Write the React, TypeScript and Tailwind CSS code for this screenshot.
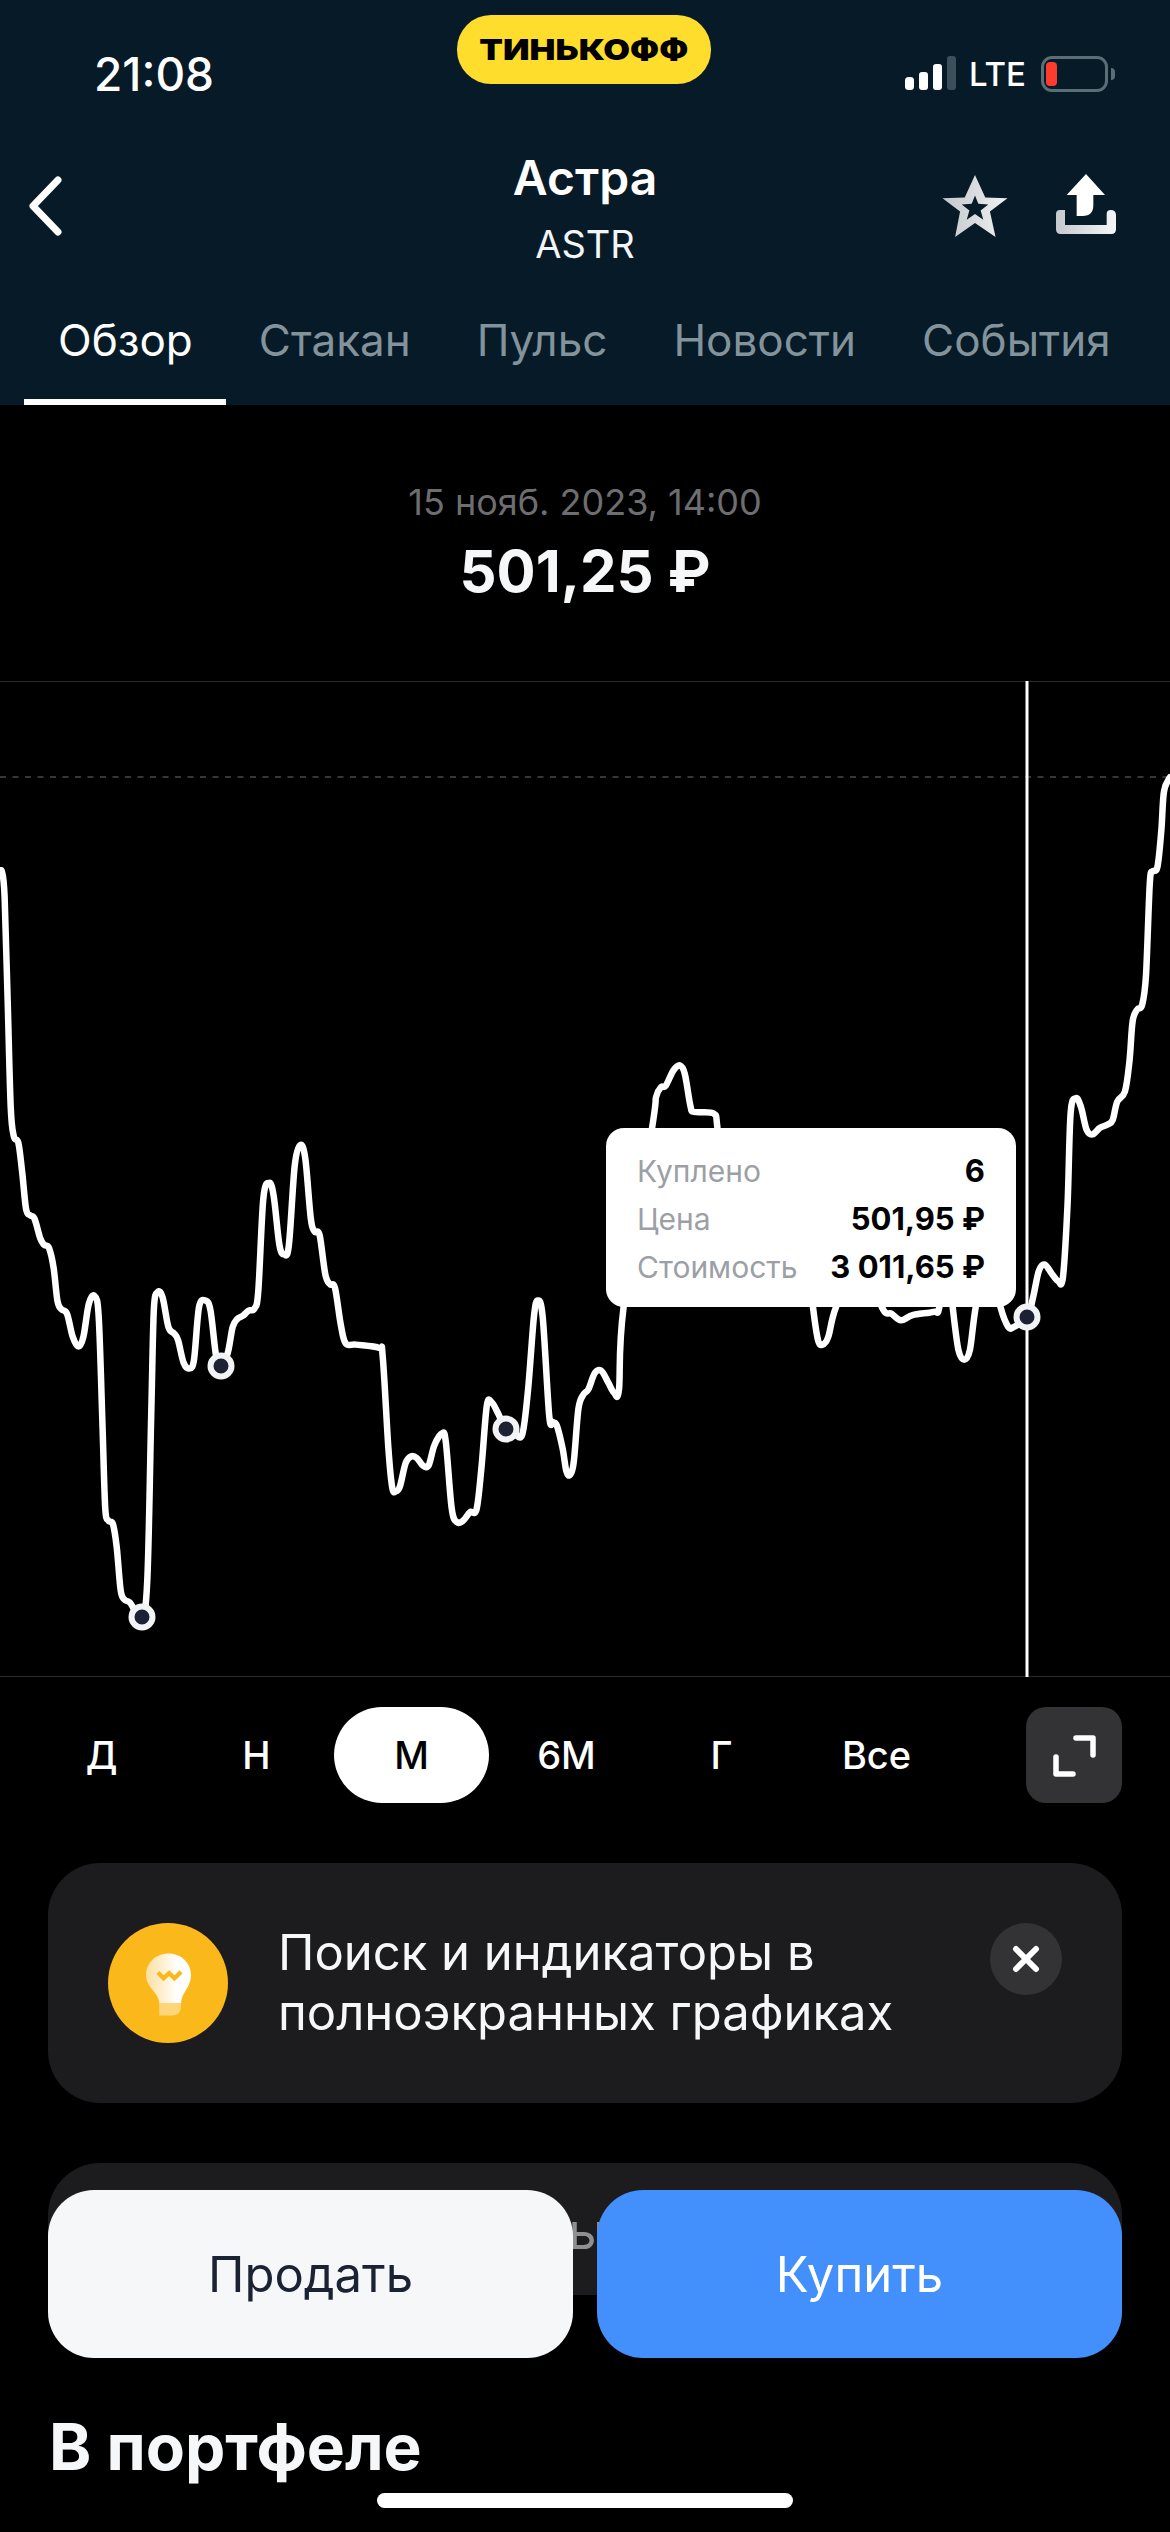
const tabs = ['Обзор', 'Стакан', 'Пульс', 'Новости', 'События'];
const periods = ['Д', 'Н', 'М', '6М', 'Г', 'Все'];

// traced from the reference, left half and right half of the chart
const leftPts = [
  [0, 325], [5, 322], [12, 360], [20, 520], [28, 680], [36, 725], [48, 735], [58, 780], [68, 835], [78, 845], [90, 850],
  [105, 880], [115, 890], [128, 895], [140, 925], [150, 975], [160, 988], [175, 995], [190, 1030], [205, 1045], [218, 1030],
  [232, 980], [247, 968], [258, 1000], [268, 1170], [275, 1290], [283, 1310], [295, 1315], [305, 1350], [315, 1415],
  [325, 1430], [340, 1435], [370, 1457], [385, 1400], [395, 1150], [402, 990], [412, 962], [425, 970], [440, 1015],
  [455, 1025], [465, 1035], [480, 1070], [495, 1078], [507, 1065], [520, 985], [537, 975], [550, 990], [565, 1060],
  [578, 1075], [595, 1055], [608, 1015], [620, 1003], [635, 998], [650, 990], [665, 987], [675, 960], [688, 820],
  [703, 796], [715, 815], [730, 890], [743, 905], [755, 890], [770, 770], [785, 738], [798, 760], [812, 850], [822, 870],
  [835, 875], [850, 935], [862, 950], [875, 955], [890, 1010], [903, 1040], [930, 1042], [990, 1047], [1000, 1060],
  [1015, 1200], [1025, 1260], [1035, 1265], [1045, 1258], [1060, 1222], [1075, 1212], [1090, 1215], [1105, 1226],
  [1120, 1226], [1135, 1195], [1155, 1177], [1165, 1190], [1180, 1290], [1193, 1312], [1210, 1310], [1228, 1297],
  [1245, 1293], [1258, 1230], [1272, 1135], [1285, 1130], [1300, 1145], [1322, 1170], [1345, 1178], [1365, 1178],
  [1380, 1110], [1395, 1000], [1405, 975], [1418, 1000], [1435, 1150], [1445, 1160], [1455, 1165], [1470, 1200],
  [1480, 1235], [1490, 1240],
].map(([x, y]) => [x / 2.613, 660 + y / 1.522]);

const rightPts = [
  [10, 1220], [22, 1140], [35, 1118], [48, 1110], [65, 1085], [82, 1082], [100, 1100], [115, 1115], [128, 1110], [140, 985],
  [215, 710], [225, 665], [238, 650], [250, 648], [270, 625], [287, 617], [300, 630], [315, 680], [325, 688], [375, 690],
  [385, 710], [400, 800], [620, 900], [635, 985], [648, 1035], [660, 1042], [675, 1030], [695, 985], [760, 900], [815, 985],
  [840, 995], [865, 1005], [895, 997], [950, 992], [965, 985], [985, 900], [1000, 985], [1015, 1050], [1030, 1065],
  [1045, 1050], [1060, 985], [1090, 900], [1125, 985], [1145, 1015], [1160, 1015], [1195, 1000], [1210, 970], [1225, 930],
  [1240, 920], [1260, 935], [1275, 945], [1288, 940], [1300, 830], [1308, 690], [1322, 667], [1335, 680], [1350, 715],
  [1365, 722], [1385, 712], [1405, 707], [1418, 700], [1430, 672], [1450, 657], [1462, 610], [1470, 550], [1482, 532],
  [1495, 525], [1505, 480], [1515, 340], [1522, 322], [1535, 315], [1545, 260], [1552, 200], [1568, 178],
].map(([x, y]) => [570 + x / 2.613, 660 + y / 1.522]);

function smooth(pts: number[][]) {
  let d = `M${pts[0][0]} ${pts[0][1]}`;
  for (let i = 0; i < pts.length - 1; i++) {
    const p0 = pts[i - 1] || pts[i];
    const p1 = pts[i];
    const p2 = pts[i + 1];
    const p3 = pts[i + 2] || p2;
    const c1x = p1[0] + (p2[0] - p0[0]) / 6;
    const c1y = p1[1] + (p2[1] - p0[1]) / 6;
    const c2x = p2[0] - (p3[0] - p1[0]) / 6;
    const c2y = p2[1] - (p3[1] - p1[1]) / 6;
    d += ` C${c1x.toFixed(1)} ${c1y.toFixed(1)} ${c2x.toFixed(1)} ${c2y.toFixed(1)} ${p2[0].toFixed(1)} ${p2[1].toFixed(1)}`;
  }
  return d;
}

const linePath = smooth([...leftPts, ...rightPts]);
const markers = [
  [142, 1617],
  [221, 1366],
  [506, 1429],
  [1027, 1317],
];

function StatusBar() {
  return (
    <div className="relative flex h-[120px] items-start justify-between pl-[94px] pr-[55px] pt-[46px]">
      <span className="text-[46px] font-medium leading-[56px] text-white">21:08</span>
      <div className="absolute left-[457px] top-[15px] flex h-[69px] w-[254px] items-center justify-center rounded-[34px] bg-[#ffdd2d]">
        <span className="inline-block scale-x-[1.19] text-[29px] font-black text-black">ТИНЬКОФФ</span>
      </div>
      <div className="mt-[10px] flex items-center">
        <svg width="51" height="36" viewBox="0 0 51 36">
          <rect x="0" y="21" width="9" height="13" rx="3.5" fill="#fff" />
          <rect x="14" y="16" width="9" height="18" rx="3" fill="#fff" />
          <rect x="28" y="8" width="9" height="26" rx="3" fill="#fff" />
          <rect x="42" y="0" width="9" height="34" rx="3" fill="#3d4f5b" />
        </svg>
        <span className="ml-[13px] text-[33px] font-medium leading-[36px] text-white">LTE</span>
        <div className="ml-[15px] flex items-center">
          <div className="flex h-[36px] w-[67px] items-center rounded-[11px] border-[3px] border-[#5b6d77] pl-[2px]">
            <div className="h-[24px] w-[11px] rounded-[4px] bg-[#ff3b30]" />
          </div>
          <div className="ml-[3px] h-[12px] w-[4px] rounded-r-full bg-[#5b6d77]" />
        </div>
      </div>
    </div>
  );
}

function NavBar() {
  return (
    <div className="relative flex h-[175px] items-start justify-between pl-[27px] pr-[54px]">
      <svg className="mt-[56px]" width="36" height="60" viewBox="0 0 36 60" fill="none">
        <path d="M31 4 L6 30 L31 56" stroke="#fff" strokeWidth="7" strokeLinecap="round" strokeLinejoin="round" />
      </svg>
      <div className="absolute inset-x-0 top-[33px] flex flex-col items-center">
        <span className="text-[48px] font-semibold leading-[50px] text-white">Астра</span>
        <span className="mt-[19px] text-[38px] leading-[44px] text-[#f2f4f5]">ASTR</span>
      </div>
      <div className="mt-[55px] flex items-start">
        <svg width="66" height="62" viewBox="187 435 196 187">
          <defs>
            <linearGradient id="silver" x1="0" y1="0" x2="1" y2="0">
              <stop offset="0" stopColor="#c3c7cb" />
              <stop offset="1" stopColor="#f0f1f2" />
            </linearGradient>
          </defs>
          <path
            fillRule="evenodd"
            fill="url(#silver)"
            d="M285 435 L316 503 L383 505 L330 545 L347 622 L285 580 L225 622 L240 545 L187 505 L254 503 Z M285 497 L275 522 L245 524 L268 542 L260 570 L285 553 L310 570 L302 542 L325 524 L295 522 Z"
          />
        </svg>
        <svg className="ml-[48px] -mt-[1px]" width="60" height="60" viewBox="528 432 180 180">
          <defs>
            <linearGradient id="tray" x1="0" y1="0" x2="1" y2="0">
              <stop offset="0" stopColor="#c6cacd" />
              <stop offset="1" stopColor="#f4f5f6" />
            </linearGradient>
          </defs>
          <path fill="#fff" d="M618 432 L675 495 L640 495 L640 525 Q640 558 608 558 L590 558 L590 495 L560 495 Z" />
          <path
            fill="url(#tray)"
            d="M528 552 Q528 540 540 540 L555 540 L555 585 L680 585 L680 552 Q680 540 692 540 Q708 540 708 556 L708 598 Q708 612 694 612 L542 612 Q528 612 528 598 Z"
          />
        </svg>
      </div>
    </div>
  );
}

function Tabs() {
  return (
    <div className="relative flex h-[110px] items-start gap-[66px] pl-[58px] pt-[20px]">
      {tabs.map((t, i) => (
        <span key={t} className={`text-[44px] leading-[50px] ${i === 0 ? 'text-white' : 'text-[#83939b]'}`}>
          {t}
        </span>
      ))}
      <div className="absolute bottom-0 left-[24px] h-[6px] w-[202px] bg-white" />
    </div>
  );
}

function Chart() {
  return (
    <div className="relative h-[996px] w-full">
      <svg width="1170" height="996" viewBox="0 681 1170 996" className="block">
        <line x1="0" y1="681.5" x2="1170" y2="681.5" stroke="#2a2a2a" strokeWidth="1" />
        <line x1="0" y1="1676.5" x2="1170" y2="1676.5" stroke="#2a2a2a" strokeWidth="1" />
        <line x1="0" y1="777" x2="1170" y2="777" stroke="#4a4a4a" strokeWidth="1.5" strokeDasharray="6 6.5" />
        <line x1="1027" y1="681" x2="1027" y2="1677" stroke="#fff" strokeWidth="3" />
        <path d={linePath} fill="none" stroke="#fff" strokeWidth="6.5" strokeLinejoin="round" strokeLinecap="round" />
        {markers.map(([x, y]) => (
          <circle key={x} cx={x} cy={y} r="10.5" fill="#1c2233" stroke="#f2f3f5" strokeWidth="6" />
        ))}
      </svg>
      <div className="absolute left-[606px] top-[447px] flex h-[179px] w-[410px] flex-col justify-center gap-[4px] rounded-[18px] bg-white px-[31px] pt-[3px]">
        <div className="flex h-[44px] items-center justify-between text-[30px]">
          <span className="text-[#9c9fa6]">Куплено</span>
          <span className="text-[31px] font-bold text-black">6</span>
        </div>
        <div className="flex h-[44px] items-center justify-between text-[30px]">
          <span className="text-[#9c9fa6]">Цена</span>
          <span className="text-[31px] font-bold text-black">501,95 ₽</span>
        </div>
        <div className="flex h-[44px] items-center justify-between text-[30px]">
          <span className="text-[#9c9fa6]">Стоимость</span>
          <span className="text-[31px] font-bold text-black">3 011,65 ₽</span>
        </div>
      </div>
    </div>
  );
}

function PeriodRow() {
  return (
    <div className="mt-[30px] flex h-[96px] items-center pl-[24px]">
      <div className="grid w-[930px] grid-cols-6">
        {periods.map((p) => (
          <div
            key={p}
            className={`flex h-[96px] items-center justify-center rounded-full text-[38px] font-medium ${
              p === 'М' ? 'bg-white text-black' : 'text-white'
            }`}
          >
            {p}
          </div>
        ))}
      </div>
      <div className="ml-[72px] flex h-[96px] w-[96px] items-center justify-center rounded-[20px] bg-[#333335]">
        <svg width="96" height="96" viewBox="0 0 96 96" fill="none">
          <path d="M50 31 H67 V48 M30 50 V67 H47" stroke="#fff" strokeWidth="5.5" strokeLinecap="round" strokeLinejoin="round" />
        </svg>
      </div>
    </div>
  );
}

function Banner() {
  return (
    <div className="mx-[48px] mt-[60px] flex h-[240px] items-start rounded-[52px] bg-[#1c1c1e] pl-[60px] pr-[60px] pt-[60px]">
      <div className="flex h-[120px] w-[120px] shrink-0 items-center justify-center rounded-full bg-[#fbb81b]">
        <svg className="mt-[2px]" width="45" height="63" viewBox="162 130 136 188">
          <defs>
            <linearGradient id="bulb" x1="0" y1="0" x2="1" y2="0">
              <stop offset="0" stopColor="#fbe09f" />
              <stop offset="0.7" stopColor="#ffffff" />
            </linearGradient>
          </defs>
          <path
            fill="url(#bulb)"
            d="M230 130 C268 130 298 158 298 196 C298 232 268 250 268 280 L202 280 C202 250 162 232 162 196 C162 158 192 130 230 130 Z"
          />
          <path fill="#fdd67a" d="M202 280 H268 V290 Q268 318 240 318 H202 Z" />
          <path d="M198 188 L215 205 L232 190 L248 205 L268 186" fill="none" stroke="#fbb81b" strokeWidth="13" />
        </svg>
      </div>
      <p className="ml-[50px] w-[640px] text-[49px] leading-[60px] text-[#f6f7f8]">
        Поиск и индикаторы в полноэкранных графиках
      </p>
      <div className="ml-auto flex h-[72px] w-[72px] shrink-0 items-center justify-center rounded-full bg-[#333335]">
        <svg width="28" height="28" viewBox="0 0 28 28" fill="none">
          <path d="M4 4 L24 24 M24 4 L4 24" stroke="#fff" strokeWidth="6" strokeLinecap="round" />
        </svg>
      </div>
    </div>
  );
}

export default function App() {
  return (
    <div className="relative h-[2532px] w-[1170px] overflow-hidden bg-black font-['Inter','Noto_Sans',sans-serif]">
      <div className="h-[405px] bg-[#071a27]">
        <StatusBar />
        <NavBar />
        <Tabs />
      </div>

      <div className="flex h-[276px] flex-col items-center pt-[74px]">
        <span className="text-[36px] leading-[46px] text-[#6e6e70]">15 нояб. 2023, 14:00</span>
        <span className="mt-[10px] text-[58px] font-bold leading-[72px] text-[#f6f7f8]">501,25 ₽</span>
      </div>

      <Chart />
      <PeriodRow />
      <Banner />

      <div className="mx-[48px] mt-[60px] flex h-[132px] items-start overflow-hidden rounded-t-[52px] bg-[#1c1c1e] pl-[316px] pt-[40px]">
        <span className="text-[50px] leading-[56px] text-[#8e8e93]">Прогнозы</span>
      </div>

      <h2 className="ml-[49px] mt-[114px] text-[64px] font-bold leading-[76px] text-[#f6f7f8]">В портфеле</h2>

      <div className="absolute left-[48px] top-[2190px] flex w-[1074px] gap-[24px]">
        <div className="flex h-[168px] w-[525px] items-center justify-center rounded-[46px] bg-[#f5f7f9] pt-[2px] text-[49px] text-[#1a2233]">
          Продать
        </div>
        <div className="flex h-[168px] w-[525px] items-center justify-center rounded-[46px] bg-[#438ffc] pt-[2px] text-[49px] text-white">
          Купить
        </div>
      </div>

      <div className="absolute left-[377px] top-[2493px] h-[15px] w-[416px] rounded-full bg-white" />
    </div>
  );
}
